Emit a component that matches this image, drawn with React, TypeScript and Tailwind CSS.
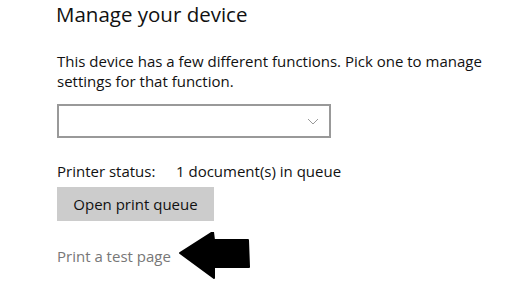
export default function App() {
  return (
    <div className="w-[511px] h-[284px] bg-white overflow-hidden pl-[56px] text-[#000]" style={{ fontFamily: '"Open Sans", "Noto Sans", sans-serif' }}>
      <h1 className="text-[20.5px] leading-[28px] font-normal text-[#111]">Manage your device</h1>
      <p className="mt-[23px] ml-[1px] w-[440px] text-[15px] leading-[20px] text-[#111]">
        This device has a few different functions. Pick one to manage settings for that function.
      </p>
      <div className="mt-[13px] ml-[1px] flex h-[34px] w-[274px] items-center justify-end border-2 border-[#999] pr-[10px]">
        <svg viewBox="0 0 12 7" className="h-[7px] w-[12px]" aria-hidden="true">
          <path d="M1 1l5 5 5-5" fill="none" stroke="#999" strokeWidth="1" />
        </svg>
      </div>
      <div className="mt-[23px] ml-[1px] flex text-[15px] leading-[20px] text-[#111]">
        <span className="w-[119px]">Printer status:</span>
        <span>1 document(s) in queue</span>
      </div>
      <button className="mt-[6px] ml-[1px] h-[34px] w-[157px] bg-[#cccccc] text-[15px] text-[#111]">
        Open print queue
      </button>
      <div className="mt-[11px] ml-[1px] flex items-center">
        <span className="text-[15px] leading-[20px] text-[#777]">Print a test page</span>
        <svg viewBox="0 0 72 48" className="ml-[8px] h-[48px] w-[72px]" aria-hidden="true">
          <path d="M1 21 L34 0 L35 8 L69 8 L70 35 L35 35 L35 46 Z" fill="#000" strokeLinejoin="round" stroke="#000" strokeWidth="2" />
        </svg>
      </div>
    </div>
  );
}
